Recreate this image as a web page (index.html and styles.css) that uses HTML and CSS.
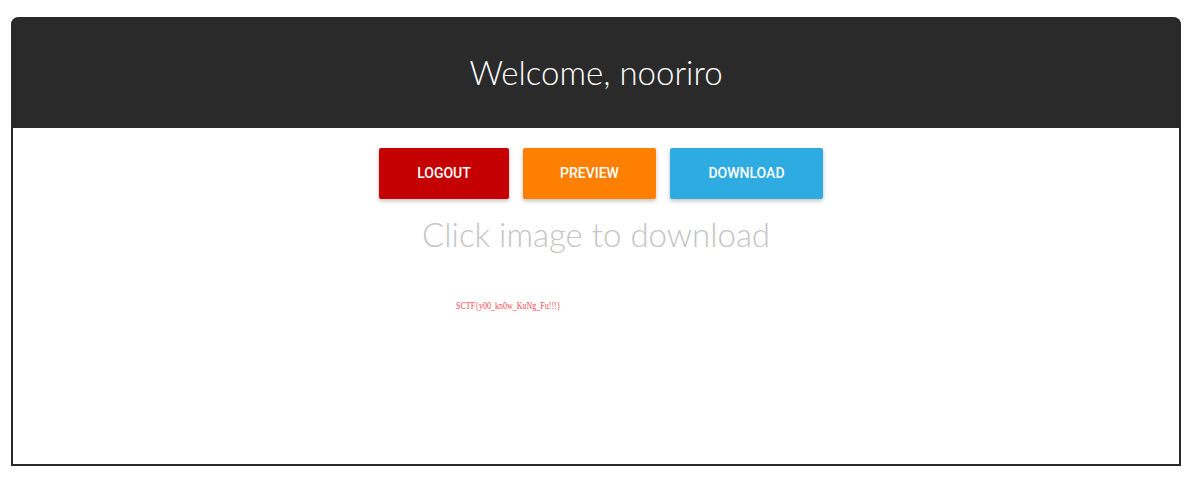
FILE: index.html
```html
<!DOCTYPE html>
<html lang="en">
<head>
    <meta charset="UTF-8">
    <meta name="viewport" content="width=device-width, initial-scale=1.0">
    <title>Welcome</title>
    <link rel="stylesheet" href="styles.css">
</head>
<body>
    <div class="panel">
        <div class="panel-header">
            <h1>Welcome, nooriro</h1>
        </div>
        <div class="panel-body">
            <div class="button-row">
                <a class="btn btn-logout" href="#">LOGOUT</a>
                <a class="btn btn-preview" href="#">PREVIEW</a>
                <a class="btn btn-download" href="#">DOWNLOAD</a>
            </div>
            <h2>Click image to download</h2>
            <div class="flag-image">SCTF{y00_kn0w_KuNg_Fu!!!}</div>
        </div>
    </div>
</body>
</html>
```

FILE: styles.css
```css
body {
    font-family: "Lato", sans-serif;
    background-color: #fff;
    margin: 0;
    padding: 17px 16px 13px 11px;
}
.panel {
    border: 2px solid #2a2a2a;
    border-top: none;
    border-radius: 8px 8px 0 0;
    height: 449px;
    box-sizing: border-box;
    display: flex;
    flex-direction: column;
}
.panel-header {
    background-color: #2a2a2a;
    height: 111px;
    margin: 0 -2px;
    border-radius: 8px 8px 0 0;
    display: flex;
    justify-content: center;
    align-items: center;
}
h1 {
    margin: 0 0 2px;
    color: #fff;
    font-size: 33px;
    font-weight: 300;
}
.panel-body {
    padding-top: 20px;
    text-align: center;
}
.button-row {
    display: flex;
    justify-content: center;
    gap: 14px;
    padding-left: 10px;
}
.btn {
    display: block;
    height: 51px;
    line-height: 50px;
    color: #fff;
    font-family: "Roboto", sans-serif;
    font-size: 14px;
    font-weight: 500;
    text-decoration: none;
    border-radius: 2px;
    box-shadow: 0 2px 4px rgba(0, 0, 0, 0.25);
}
.btn-logout {
    width: 130px;
    background-color: #c40000;
}
.btn-preview {
    width: 133px;
    background-color: #ff7f00;
}
.btn-download {
    width: 153px;
    background-color: #2eace2;
}
h2 {
    margin: 12px 0 0;
    color: #c4c4c4;
    font-size: 33px;
    font-weight: 300;
    line-height: 46px;
}
.flag-image {
    margin: 43px 0 0 443px;
    text-align: left;
    color: #f4484f;
    font-family: "Liberation Serif", serif;
    font-size: 10px;
    line-height: 12px;
    transform: scaleX(0.8);
    transform-origin: left;
}
```
